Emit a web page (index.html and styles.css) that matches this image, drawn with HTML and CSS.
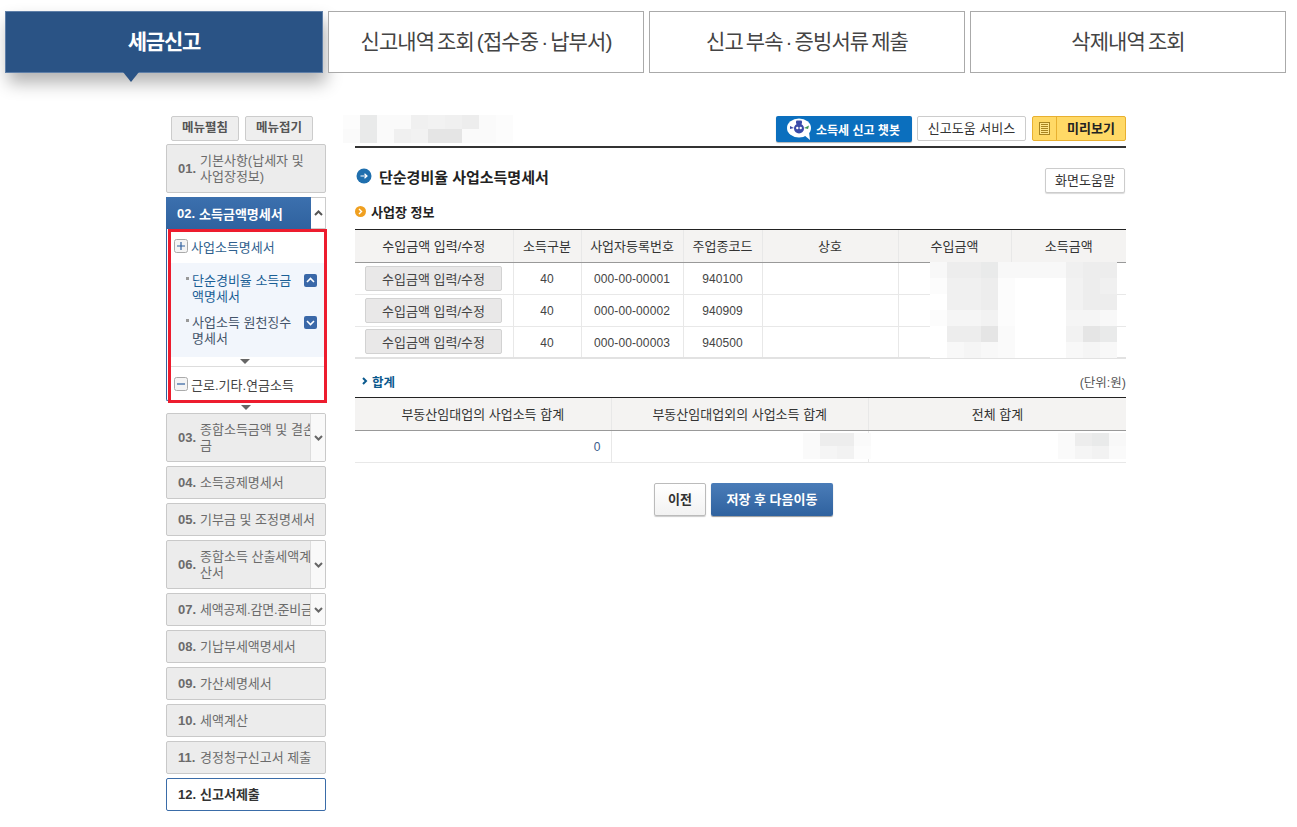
FILE: index.html
```html
<!DOCTYPE html>
<html lang="ko">
<head>
  <meta charset="UTF-8">
  <title>세금신고</title>
  <link rel="stylesheet" href="styles.css">
</head>
<body>

  <!-- Top tabs -->
  <div class="tabs">
    <div class="tab active">세금신고</div>
    <div class="tab">신고내역 조회 (접수중 · 납부서)</div>
    <div class="tab">신고 부속 · 증빙서류 제출</div>
    <div class="tab">삭제내역 조회</div>
  </div>

  <div class="wrap">
    <!-- Left menu -->
    <div class="side">
      <div class="side-btns">
        <div class="side-btn">메뉴펼침</div>
        <div class="side-btn">메뉴접기</div>
      </div>

      <div class="item tall"><b>01.</b><span class="txt">기본사항(납세자 및<br>사업장정보)</span></div>

      <div class="open-head">
        <div class="open-title"><b>02.</b><span>소득금액명세서</span></div>
        <div class="arrow-box"><svg width="9" height="6" viewBox="0 0 9 6"><path d="M1 5 L4.5 1.5 L8 5" fill="none" stroke="#555" stroke-width="2"/></svg></div>
      </div>
      <div class="open-panel">
        <div class="group first">
          <svg class="box-icon" width="14" height="14" viewBox="0 0 14 14"><rect x=".5" y=".5" width="13" height="13" rx="2" fill="#f4f4f4" stroke="#aaa"/><path d="M3 7 H11 M7 3 V11" stroke="#2f5f9e" stroke-width="1.2"/></svg>
          <span>사업소득명세서</span>
        </div>
        <div class="sub">
          <div class="sub-item on">
            <i class="dot"></i>
            <span>단순경비율 소득금<br>액명세서</span>
            <svg class="chip" width="13" height="13" viewBox="0 0 13 13"><rect width="13" height="13" rx="2" fill="#3a68a8"/><path d="M3 8 L6.5 4.5 L10 8" fill="none" stroke="#fff" stroke-width="1.6"/></svg>
          </div>
          <div class="sub-item">
            <i class="dot"></i>
            <span>사업소득 원천징수<br>명세서</span>
            <svg class="chip" width="13" height="13" viewBox="0 0 13 13"><rect width="13" height="13" rx="2" fill="#3a68a8"/><path d="M3 5 L6.5 8.5 L10 5" fill="none" stroke="#fff" stroke-width="1.6"/></svg>
          </div>
        </div>
        <div class="tri-row"><i class="tri"></i></div>
        <div class="group last">
          <svg class="box-icon" width="14" height="14" viewBox="0 0 14 14"><rect x=".5" y=".5" width="13" height="13" rx="2" fill="#f4f4f4" stroke="#aaa"/><path d="M3 7 H11" stroke="#2f5f9e" stroke-width="1.2"/></svg>
          <span>근로.기타.연금소득</span>
        </div>
      </div>
      <div class="tri-out"><i class="tri"></i></div>

      <div class="item tall has-arrow">
        <div class="item-in"><b>03.</b><span class="txt">종합소득금액 및 결손<br>금</span></div>
        <div class="arrow-box"><svg width="9" height="6" viewBox="0 0 9 6"><path d="M1 1 L4.5 4.5 L8 1" fill="none" stroke="#666" stroke-width="2"/></svg></div>
      </div>
      <div class="item"><b>04.</b><span class="txt">소득공제명세서</span></div>
      <div class="item"><b>05.</b><span class="txt">기부금 및 조정명세서</span></div>
      <div class="item tall has-arrow">
        <div class="item-in"><b>06.</b><span class="txt">종합소득 산출세액계<br>산서</span></div>
        <div class="arrow-box"><svg width="9" height="6" viewBox="0 0 9 6"><path d="M1 1 L4.5 4.5 L8 1" fill="none" stroke="#666" stroke-width="2"/></svg></div>
      </div>
      <div class="item has-arrow">
        <div class="item-in"><b>07.</b><span class="txt tight">세액공제.감면.준비금</span></div>
        <div class="arrow-box"><svg width="9" height="6" viewBox="0 0 9 6"><path d="M1 1 L4.5 4.5 L8 1" fill="none" stroke="#666" stroke-width="2"/></svg></div>
      </div>
      <div class="item"><b>08.</b><span class="txt">기납부세액명세서</span></div>
      <div class="item"><b>09.</b><span class="txt">가산세명세서</span></div>
      <div class="item"><b>10.</b><span class="txt">세액계산</span></div>
      <div class="item"><b>11.</b><span class="txt">경정청구신고서 제출</span></div>
      <div class="item current"><b>12.</b><span class="txt">신고서제출</span></div>

      <!-- Red highlight over the open menu -->
      <div class="red-box"></div>
    </div>

    <!-- Main content -->
    <div class="main">
      <div class="toolbar">
        <div class="mosaic mosaic-top">
          <i class="g9"></i><i class="g2"></i><i class="g8"></i><i class="g8"></i><i class="g4"></i><i class="g5"></i><i class="g4"></i><i class="g3"></i><i class="g8"></i><i class="g9"></i>
          <i class="g8"></i><i class="g2"></i><i class="g8"></i><i class="g4"></i><i class="g5"></i><i class="g1"></i><i class="g1"></i><i class="g8"></i><i class="g8"></i><i class="g9"></i>
        </div>
        <div class="btn-chat">
          <svg width="26" height="22" viewBox="0 0 26 22"><ellipse cx="12" cy="10" rx="12" ry="9.5" fill="#fff"/><path d="M17 17 L23 22 L22 14 Z" fill="#fff"/><circle cx="12" cy="10.5" r="5" fill="#3a4aa8"/><rect x="9" y="2.5" width="6" height="3.5" rx="1" fill="#3a4aa8"/><circle cx="10.3" cy="10" r="1.2" fill="#fff"/><circle cx="13.7" cy="10" r="1.2" fill="#fff"/><path d="M17 10 L22 7.5 L21 11 Z" fill="#3f9a5a"/><path d="M7 10 L3 8 L3 11 Z" fill="#3a4aa8"/></svg>
          <span>소득세 신고 챗봇</span>
        </div>
        <div class="btn-white">신고도움 서비스</div>
        <div class="btn-preview">
          <div class="doc"><svg width="11" height="13" viewBox="0 0 11 13"><rect x=".5" y=".5" width="10" height="12" fill="#ffe58a" stroke="#a88420"/><path d="M2 2.5 H9 M2 4.5 H9 M2 6.5 H9 M2 8.5 H9 M2 10.5 H9" stroke="#a88420"/></svg></div>
          <span>미리보기</span>
        </div>
      </div>

      <div class="title-row">
        <div class="title">
          <svg width="16" height="16" viewBox="0 0 16 16"><circle cx="8" cy="8" r="7.5" fill="#1f6fae"/><path d="M4.5 8 H11 M8.5 5.8 L11 8 L8.5 10.2" fill="none" stroke="#fff" stroke-width="1.2"/></svg>
          <span>단순경비율 사업소득명세서</span>
        </div>
        <div class="btn-help">화면도움말</div>
      </div>

      <div class="sub-title">
        <svg width="11" height="11" viewBox="0 0 11 11"><circle cx="5.5" cy="5.5" r="5.5" fill="#f0a020"/><path d="M4 3 L6.5 5.5 L4 8" fill="none" stroke="#fff" stroke-width="1.4"/></svg>
        <span>사업장 정보</span>
      </div>

      <div class="table-box first-box">
        <table class="grid first-grid">
          <colgroup><col class="c1"><col class="c2"><col class="c3"><col class="c4"><col class="c5"><col class="c6"><col class="c7"></colgroup>
          <thead>
            <tr><th>수입금액 입력/수정</th><th>소득구분</th><th>사업자등록번호</th><th>주업종코드</th><th>상호</th><th>수입금액</th><th>소득금액</th></tr>
          </thead>
          <tbody>
            <tr><td><div class="btn-row">수입금액 입력/수정</div></td><td>40</td><td>000-00-00001</td><td>940100</td><td></td><td></td><td></td></tr>
            <tr><td><div class="btn-row">수입금액 입력/수정</div></td><td>40</td><td>000-00-00002</td><td>940909</td><td></td><td></td><td></td></tr>
            <tr><td><div class="btn-row">수입금액 입력/수정</div></td><td>40</td><td>000-00-00003</td><td>940500</td><td></td><td></td><td></td></tr>
          </tbody>
        </table>
        <!-- Blurred amounts -->
        <div class="mosaic mosaic-amount">
          <i class="g7"></i><i class="g3"></i><i class="g3"></i><i class="g2"></i><i class="g7"></i><i class="g7"></i><i class="g7"></i><i class="g7"></i><i class="g4"></i><i class="g3"></i><i class="g3"></i>
          <i class="g9"></i><i class="g4"></i><i class="g4"></i><i class="g3"></i><i class="g9"></i><i class="g10"></i><i class="g10"></i><i class="g10"></i><i class="g5"></i><i class="g3"></i><i class="g4"></i>
          <i class="g10"></i><i class="g4"></i><i class="g4"></i><i class="g3"></i><i class="g9"></i><i class="g10"></i><i class="g10"></i><i class="g10"></i><i class="g5"></i><i class="g3"></i><i class="g3"></i>
          <i class="g9"></i><i class="g6"></i><i class="g6"></i><i class="g5"></i><i class="g9"></i><i class="g10"></i><i class="g10"></i><i class="g10"></i><i class="g6"></i><i class="g6"></i><i class="g7"></i>
          <i class="g10"></i><i class="g3"></i><i class="g3"></i><i class="g1"></i><i class="g8"></i><i class="g10"></i><i class="g10"></i><i class="g10"></i><i class="g5"></i><i class="g1"></i><i class="g2"></i>
          <i class="g10"></i><i class="g7"></i><i class="g6"></i><i class="g7"></i><i class="g8"></i><i class="g10"></i><i class="g10"></i><i class="g10"></i><i class="g7"></i><i class="g6"></i><i class="g7"></i>
        </div>
      </div>

      <div class="sum-row">
        <div class="sum-title">
          <svg width="6" height="8" viewBox="0 0 6 8"><path d="M1 1 L4 4 L1 7" fill="none" stroke="#0b5a8e" stroke-width="2"/></svg>
          <span>합계</span>
        </div>
        <span class="unit">(단위:원)</span>
      </div>

      <div class="table-box">
        <table class="grid sum-grid">
          <thead>
            <tr><th>부동산임대업의 사업소득 합계</th><th>부동산임대업외의 사업소득 합계</th><th>전체 합계</th></tr>
          </thead>
          <tbody>
            <tr><td class="num">0</td><td></td><td></td></tr>
          </tbody>
        </table>
        <div class="mosaic mosaic-sum1">
          <i class="g8"></i><i class="g3"></i><i class="g3"></i><i class="g8"></i>
          <i class="g8"></i><i class="g6"></i><i class="g5"></i><i class="g9"></i>
        </div>
        <div class="mosaic mosaic-sum2">
          <i class="g8"></i><i class="g3"></i><i class="g2"></i><i class="g7"></i>
          <i class="g8"></i><i class="g6"></i><i class="g5"></i><i class="g8"></i>
        </div>
      </div>

      <div class="actions">
        <div class="btn-prev">이전</div>
        <div class="btn-next">저장 후 다음이동</div>
      </div>
    </div>
  </div>

</body>
</html>
```

FILE: styles.css
```css
* {
  box-sizing: border-box;
}
body {
  font-family: "Liberation Sans", "Noto Sans CJK KR", sans-serif;
  font-size: 13px;
  background-color: white;
  color: #333;
  margin: 0;
  padding: 0;
}

/* top tabs */
.tabs {
  display: flex;
  gap: 5px;
  padding: 11px 0 0 5px;
}
.tab {
  position: relative;
  width: 316px;
  height: 62px;
  padding-bottom: 4px;
  display: flex;
  align-items: center;
  justify-content: center;
  font-size: 21px;
  letter-spacing: -0.9px;
  word-spacing: -2px;
  color: #444;
  background-color: white;
  border: 1px solid #aaa;
}
.tab.active {
  width: 318px;
  font-weight: bold;
  letter-spacing: -1.2px;
  color: white;
  background-color: #2a5385;
  border-color: #5f7fa8;
  box-shadow: 3px 10px 16px rgba(0, 0, 0, 0.3);
}
.tab.active::after {
  content: "";
  position: absolute;
  left: 117px;
  top: 60px;
  border-left: 8px solid transparent;
  border-right: 8px solid transparent;
  border-top: 10px solid #2a5385;
}

.wrap {
  display: flex;
  margin: 43px 0 0 166px;
}

/* left menu */
.side {
  position: relative;
  width: 160px;
}
.side-btns {
  display: flex;
  gap: 6px;
  padding-left: 5px;
  margin-bottom: 3px;
}
.side-btn {
  width: 68px;
  height: 25px;
  line-height: 23px;
  text-align: center;
  font-size: 12.5px;
  font-weight: bold;
  color: #555;
  background-color: #eee;
  border: 1px solid #ccc;
  border-radius: 2px;
}
.item {
  display: flex;
  align-items: center;
  height: 33px;
  margin-bottom: 4px;
  padding: 1px 0 0 11px;
  color: #6b6b6b;
  line-height: 16px;
  white-space: nowrap;
  overflow: hidden;
  background-color: #ececec;
  border: 1px solid #c9c9c9;
  border-radius: 2px;
}
.item.tall {
  height: 49px;
}
.item b, .open-title b {
  width: 22px;
  flex: none;
  font-size: 13px;
}
.item.has-arrow {
  padding: 0;
}
.item-in {
  flex: 1;
  min-width: 0;
  display: flex;
  align-items: center;
  padding: 1px 0 0 11px;
  overflow: hidden;
}
.tight {
  letter-spacing: -0.2px;
}
.arrow-box {
  width: 15px;
  flex: none;
  align-self: stretch;
  display: flex;
  align-items: center;
  justify-content: center;
  background-color: #f9f9f9;
  border-left: 1px solid #ddd;
}
.item.current {
  color: #333;
  background-color: white;
  border-color: #3a6ca8;
  font-weight: bold;
}

.open-head {
  display: flex;
  height: 32px;
}
.open-title {
  flex: 1;
  display: flex;
  align-items: center;
  padding-left: 11px;
  font-weight: bold;
  color: white;
  background: linear-gradient(#3c70ae, #2f629f);
}
.open-head .arrow-box {
  background-color: white;
  border: 1px solid #ccc;
  border-left: 0;
}
.open-panel {
  height: 172px;
  background-color: white;
  border-left: 1px solid #2f629f;
  border-bottom: 1px solid #2f629f;
  border-radius: 0 0 0 2px;
}
.group {
  display: flex;
  align-items: center;
  gap: 3px;
  padding-left: 7px;
  color: #444;
}
.group.first {
  height: 34px;
  color: #2f5f8e;
}
.group.last {
  height: 35px;
  border-top: 1px solid #ddd;
  margin: 0 2px 0 3px;
  padding-left: 4px;
}
.sub {
  height: 94px;
  margin: 0 2px 0 4px;
  padding: 10px 0 0 11px;
  background-color: #f2f6fc;
}
.sub-item {
  position: relative;
  height: 42px;
  padding-left: 10px;
  line-height: 16px;
  white-space: nowrap;
  color: #44546a;
}
.sub-item.on {
  color: #1a5f96;
}
.dot {
  position: absolute;
  left: 4px;
  top: 4px;
  width: 3px;
  height: 3px;
  background-color: #999;
}
.chip {
  position: absolute;
  right: 7px;
  top: 1px;
}
.tri-row {
  height: 9px;
  display: flex;
  justify-content: center;
  align-items: center;
  padding-right: 4px;
}
.tri-out {
  height: 12px;
  display: flex;
  justify-content: center;
  align-items: center;
}
.tri {
  display: block;
  border-left: 5px solid transparent;
  border-right: 5px solid transparent;
  border-top: 5px solid #666;
}
.red-box {
  position: absolute;
  left: 2px;
  top: 113px;
  width: 159px;
  height: 174px;
  border: 3px solid #ed1c2e;
}

/* main */
.main {
  width: 771px;
  margin-left: 29px;
}
.toolbar {
  display: flex;
  align-items: flex-start;
  height: 32px;
  border-bottom: 2px solid #333;
}
.mosaic {
  display: grid;
  grid-auto-rows: 14px;
}
.mosaic i {
  display: block;
}
.mosaic-top {
  grid-template-columns: repeat(10, 17px);
  margin: -1px auto 0 -12px;
}
.g1 { background-color: #e5e5e5; }
.g2 { background-color: #e9eaea; }
.g3 { background-color: #ededed; }
.g4 { background-color: #f0f0f0; }
.g5 { background-color: #f2f2f2; }
.g6 { background-color: #f5f5f5; }
.g7 { background-color: #f8f8f8; }
.g8 { background-color: #fafafa; }
.g9 { background-color: #fcfcfc; }
.g10 { background-color: #ffffff; }

.btn-chat {
  width: 136px;
  height: 26px;
  display: flex;
  align-items: center;
  gap: 3px;
  padding-left: 11px;
  font-size: 12px;
  font-weight: bold;
  color: white;
  background-color: #0b6fbe;
  border-radius: 2px;
  box-shadow: 0 1px 1px rgba(0, 0, 0, 0.3);
}
.btn-white {
  width: 109px;
  height: 25px;
  margin-left: 5px;
  line-height: 23px;
  text-align: center;
  background-color: white;
  border: 1px solid #ccc;
  border-radius: 2px;
}
.btn-preview {
  width: 94px;
  height: 25px;
  margin-left: 6px;
  display: flex;
  font-weight: bold;
  color: #222;
  background-color: #ffd966;
  border: 1px solid #e8b030;
  border-radius: 2px;
}
.doc {
  width: 24px;
  display: flex;
  align-items: center;
  justify-content: center;
  border-right: 1px solid #e8b030;
}
.btn-preview span {
  flex: 1;
  line-height: 23px;
  text-align: center;
}

.title-row {
  display: flex;
  justify-content: space-between;
  padding-top: 20px;
  height: 53px;
}
.title {
  display: flex;
  align-items: center;
  gap: 7px;
  height: 16px;
  margin-left: 1px;
  font-size: 15px;
  font-weight: bold;
  color: #222;
}
.btn-help {
  width: 80px;
  height: 25px;
  margin-right: 1px;
  line-height: 23px;
  text-align: center;
  background-color: white;
  border: 1px solid #ccc;
  border-radius: 2px;
  box-shadow: 0 1px 1px rgba(0, 0, 0, 0.15);
}
.sub-title {
  display: flex;
  align-items: center;
  gap: 5px;
  height: 16px;
  margin-top: 2px;
  font-weight: bold;
  color: #222;
}

/* tables */
.table-box {
  position: relative;
  border-top: 1px solid #222;
}
.first-box {
  margin-top: 10px;
}
.grid {
  width: 100%;
  border-collapse: collapse;
  table-layout: fixed;
}
.first-grid {
  border-bottom: 2px solid #e2e2e2;
}
.c1 { width: 158px; }
.c2 { width: 68px; }
.c3 { width: 102px; }
.c4 { width: 79px; }
.c5 { width: 136px; }
.c6 { width: 113px; }
.c7 { width: 115px; }
.grid th {
  height: 32px;
  font-size: 13px;
  font-weight: normal;
  color: #333;
  background-color: #f4f3f2;
  border-left: 1px solid #e8e8e8;
  border-bottom: 1px solid #999;
}
.sum-grid th:first-child {
  width: 256px;
}
.grid td {
  height: 32px;
  padding: 2px 0 0;
  text-align: center;
  font-size: 12px;
  letter-spacing: 0.1px;
  color: #444;
  border-left: 1px solid #e8e8e8;
  border-bottom: 1px solid #e8e8e8;
}
.grid th:first-child, .grid td:first-child {
  border-left: 0;
}
.grid td:first-child .btn-row {
  margin-top: -2px;
}
.btn-row {
  width: 137px;
  height: 25px;
  margin-left: 10px;
  line-height: 25px;
  font-size: 13px;
  letter-spacing: 0;
  background-color: #e9e8e8;
  border: 1px solid #d2d2d2;
  border-radius: 2px;
}
.grid td.num {
  text-align: right;
  padding-right: 10px;
  color: #3a5a8a;
}
.mosaic-amount {
  position: absolute;
  left: 575px;
  top: 32px;
  grid-template-columns: repeat(11, 17px);
  grid-auto-rows: 16px;
}
.mosaic-sum1 {
  position: absolute;
  left: 448px;
  top: 35px;
  grid-template-columns: repeat(4, 17px);
  grid-auto-rows: 13px;
}
.mosaic-sum2 {
  position: absolute;
  left: 703px;
  top: 35px;
  grid-template-columns: repeat(4, 17px);
  grid-auto-rows: 13px;
}

.sum-row {
  display: flex;
  justify-content: space-between;
  align-items: center;
  height: 38px;
  padding-top: 6px;
  font-size: 12.5px;
}
.sum-title {
  display: flex;
  align-items: center;
  gap: 4px;
  margin-left: 7px;
  font-weight: bold;
  color: #0b5a8e;
}
.unit {
  color: #555;
}

.actions {
  display: flex;
  justify-content: center;
  gap: 5px;
  margin-top: 20px;
  padding-left: 6px;
}
.btn-prev {
  width: 52px;
  height: 33px;
  line-height: 31px;
  text-align: center;
  font-weight: bold;
  background: linear-gradient(white, #f2f2f2);
  border: 1px solid #bbb;
  border-radius: 2px;
  box-shadow: 0 1px 1px rgba(0, 0, 0, 0.2);
}
.btn-next {
  width: 122px;
  height: 33px;
  line-height: 33px;
  text-align: center;
  font-weight: bold;
  color: white;
  background: linear-gradient(#4a7cb8, #2f629f);
  border-radius: 2px;
  box-shadow: 0 1px 1px rgba(0, 0, 0, 0.4);
}
```
